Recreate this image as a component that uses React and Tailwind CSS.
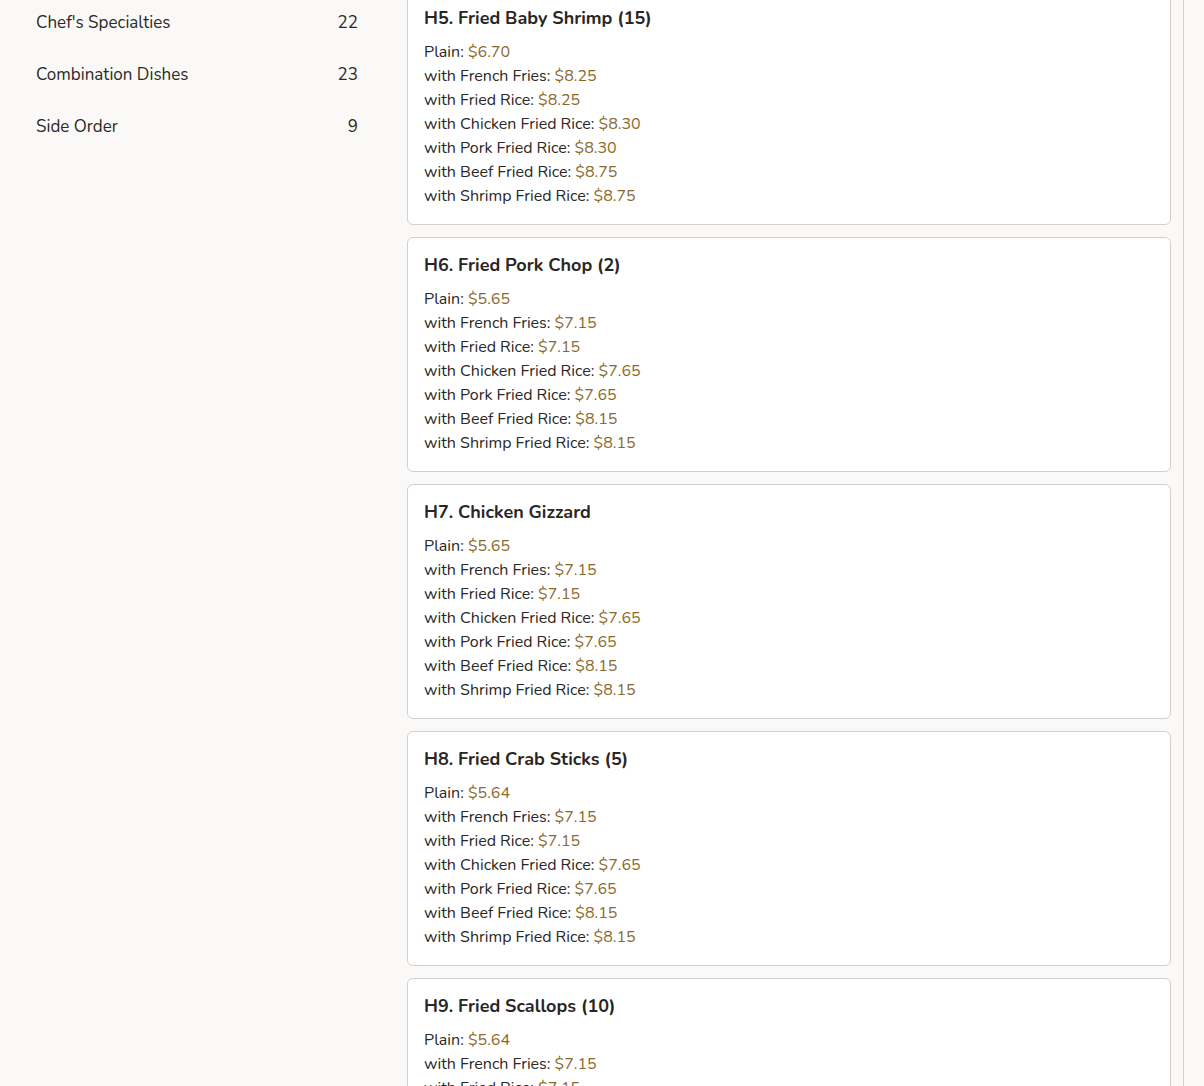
const categories = [
  { name: "Chef's Specialties", count: 22 },
  { name: 'Combination Dishes', count: 23 },
  { name: 'Side Order', count: 9 },
]

const sides = [
  'Plain',
  'with French Fries',
  'with Fried Rice',
  'with Chicken Fried Rice',
  'with Pork Fried Rice',
  'with Beef Fried Rice',
  'with Shrimp Fried Rice',
]

const items = [
  { title: 'H5. Fried Baby Shrimp (15)', prices: ['6.70', '8.25', '8.25', '8.30', '8.30', '8.75', '8.75'] },
  { title: 'H6. Fried Pork Chop (2)', prices: ['5.65', '7.15', '7.15', '7.65', '7.65', '8.15', '8.15'] },
  { title: 'H7. Chicken Gizzard', prices: ['5.65', '7.15', '7.15', '7.65', '7.65', '8.15', '8.15'] },
  { title: 'H8. Fried Crab Sticks (5)', prices: ['5.64', '7.15', '7.15', '7.65', '7.65', '8.15', '8.15'] },
  { title: 'H9. Fried Scallops (10)', prices: ['5.64', '7.15', '7.15', '7.65', '7.65', '8.15', '8.15'] },
]

const MenuCard = ({ title, prices }) => (
  <div className="bg-white border border-[#d3d0cc] rounded-[6px] px-4 pt-[15px] pb-4">
    <h3 className="text-[18px] leading-6 font-bold text-[#2a2623] mb-[10px]">{title}</h3>
    <div className="text-[16px] leading-6 text-[#2a2724]">
      {sides.map((s, i) => (
        <div key={s}>
          {s}: <span className="text-[#8a6a2c]">${prices[i]}</span>
        </div>
      ))}
    </div>
  </div>
)

export default function App() {
  return (
    <div
      className="h-screen bg-[#faf9f7] overflow-hidden"
      style={{ fontFamily: '"Nunito", "Lato", "Noto Sans", sans-serif' }}
    >
      <div className="flex -mt-[10px]">
        {/* Sidebar */}
        <aside className="w-[395px] shrink-0 pl-5 pr-[21px] pt-[7px]">
          {categories.map(c => (
            <div key={c.name} className="flex items-center justify-between px-4 py-[14px] text-[17px] leading-6 text-[#2b2926]">
              <span>{c.name}</span>
              <span>{c.count}</span>
            </div>
          ))}
        </aside>

        {/* Menu items */}
        <main className="w-[789px] shrink-0 border-r border-[#d6d3cf] px-3 flex flex-col gap-[12px] pb-10">
          {items.map(item => (
            <MenuCard key={item.title} {...item} />
          ))}
        </main>
      </div>
    </div>
  )
}
